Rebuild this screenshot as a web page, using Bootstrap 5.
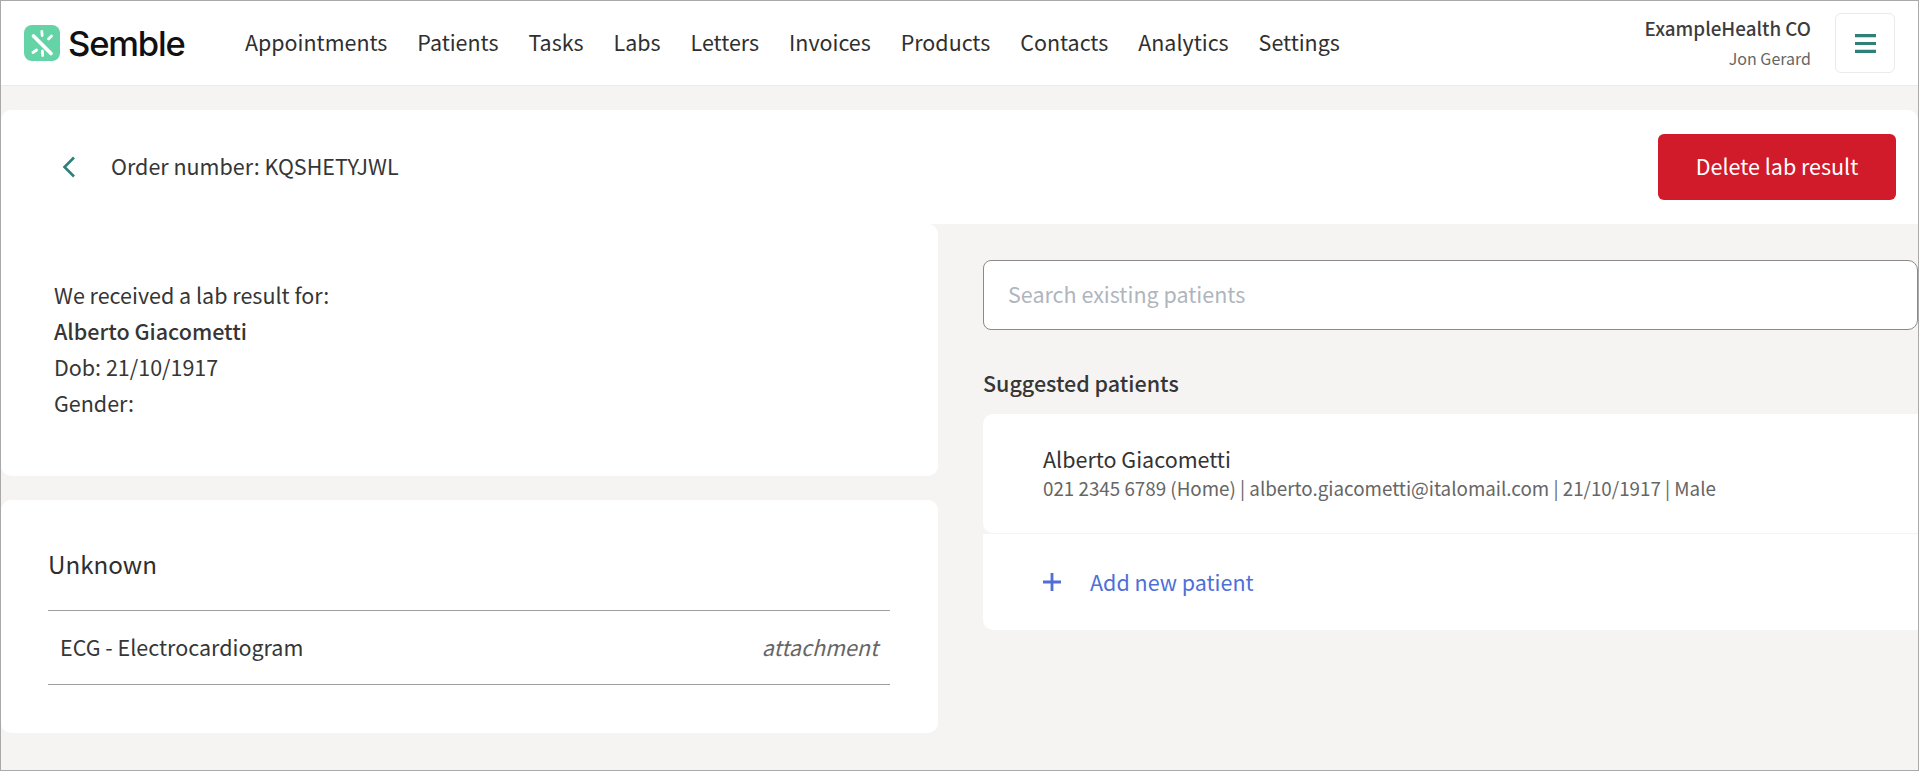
<!doctype html>
<html lang="en">
<head>
<meta charset="utf-8">
<title>Semble</title>
<link href="https://cdn.jsdelivr.net/npm/bootstrap@5.3.0/dist/css/bootstrap.min.css" rel="stylesheet">
<style>
html,body{height:100%;overflow:hidden}
body{background:#f5f4f2;color:#363636;font-family:"Noto Sans CJK JP","Noto Sans",sans-serif;font-size:21.5px;line-height:36px;border:1px solid #a9a9a9;}
.top-bar{height:85px;background:#fff;border-bottom:1px solid #ebebeb;padding:0 23px 0 23px;flex-wrap:nowrap}
.logo-box{gap:8px;width:221px;flex:none}
.logo-word{font-family:Inter,sans-serif;font-weight:500;font-size:34.6px;letter-spacing:-1.2px;color:#111;line-height:40px}
.main-links{gap:30px;padding-bottom:3px}
.main-links .nav-link{padding:0;color:#2f2f2f;font-size:21.45px;line-height:30px}
.org-box{text-align:right;line-height:1;margin-right:24px;padding-bottom:1px}
.org-name{font-weight:500;font-size:18.8px;color:#3d3d3d;line-height:30px}
.org-user{font-size:16px;color:#666;line-height:30px}
.menu-btn{width:60px;height:60px;border:1px solid #eaeaea;border-radius:6px;background:#fff;padding:0}
.head-card{height:114px;margin-top:24px;background:#fff;border:0;border-radius:10px 10px 0 0;padding:0 22px 0 61px}
.order-text{margin-left:35px;padding-bottom:3px}
.del-btn{width:238px;height:66px;background:#d11a2a;border:0;border-radius:6px;color:#fff;font-size:21.5px;font-weight:400;padding:0 0 2px}
.work-area{gap:45px}
.left-side{width:937px;flex:none;gap:24px}
.right-side{padding-top:36px;min-width:0}
.white-panel{background:#fff;border:0;border-radius:0 10px 10px 10px}
.info-panel{height:252px;padding:53px 53px}
.info-panel strong{font-weight:500}
.res-panel{height:233px;padding:36px 48px 0 47px;border-radius:10px}
.res-title{font-size:24.2px;line-height:56px;height:75px;border-bottom:1px solid #9e9e9e;color:#2f2f2f}
.res-row{height:74px;border-bottom:1px solid #9e9e9e;padding:0 12px 2px}
.res-row em{color:#666}
.search-field.form-control{height:70px;border:1px solid #8a8a8a;border-radius:8px 10px 10px 8px;padding:0 24px 3px;font-size:21.5px;color:#333;background:#fff}
.search-field::placeholder{color:#b0b5bd}
.sug-title{font-weight:500;line-height:30px;margin:38px 0 16px}
.pat-list{background:transparent;border-radius:10px 0 0 10px}
.pat-list .list-group-item{border:0;background:#fff;padding:0 60px}
.pat-one{height:119px;padding-top:29px!important;border-radius:10px 0 0 10px!important}
.pat-name{font-size:21.5px;line-height:31px;color:#333}
.pat-sub{font-size:18.8px;line-height:28px;color:#666}
.pat-two{height:96px;margin-top:1px;border-radius:0 0 0 10px!important;gap:29px;color:#4f6fd8;font-size:21.5px}
.pat-two span{padding-bottom:1px}
</style>
</head>
<body>
<nav class="navbar top-bar d-flex align-items-center">
  <a class="d-flex align-items-center logo-box text-decoration-none" href="#">
    <svg width="36" height="36" viewBox="0 0 36 36" aria-hidden="true"><rect width="36" height="36" rx="8" fill="#64d3a6"/><g stroke="#fff" stroke-linecap="round" fill="none"><path d="M9.5 11 L27 28.5" stroke-width="3.8"/><path d="M17.8 6.5 L18.2 10.5" stroke-width="2.8"/><path d="M27.5 11 L24.5 14" stroke-width="2.8"/><path d="M9 27.5 L12.5 25" stroke-width="2.8"/><path d="M18.4 26 L18.6 30.5" stroke-width="2.8"/></g></svg>
    <span class="logo-word">Semble</span>
  </a>
  <ul class="nav main-links flex-nowrap me-auto">
    <li class="nav-item"><a class="nav-link" href="#">Appointments</a></li>
    <li class="nav-item"><a class="nav-link" href="#">Patients</a></li>
    <li class="nav-item"><a class="nav-link" href="#">Tasks</a></li>
    <li class="nav-item"><a class="nav-link" href="#">Labs</a></li>
    <li class="nav-item"><a class="nav-link" href="#">Letters</a></li>
    <li class="nav-item"><a class="nav-link" href="#">Invoices</a></li>
    <li class="nav-item"><a class="nav-link" href="#">Products</a></li>
    <li class="nav-item"><a class="nav-link" href="#">Contacts</a></li>
    <li class="nav-item"><a class="nav-link" href="#">Analytics</a></li>
    <li class="nav-item"><a class="nav-link" href="#">Settings</a></li>
  </ul>
  <div class="org-box"><div class="org-name">ExampleHealth CO</div><div class="org-user">Jon Gerard</div></div>
  <button class="btn menu-btn d-flex align-items-center justify-content-center" aria-label="Menu">
    <svg width="21" height="19" viewBox="0 0 21 19" aria-hidden="true"><path d="M0 1.6H21M0 9.5H21M0 17.4H21" stroke="#2f7f7a" stroke-width="3.2"/></svg>
  </button>
</nav>
<div class="head-card d-flex align-items-center justify-content-between">
  <div class="d-flex align-items-center">
    <svg width="14" height="22" viewBox="0 0 14 22" aria-hidden="true"><path d="M12 1.5 L2.5 11 L12 20.5" fill="none" stroke="#2f7f7a" stroke-width="2.6"/></svg>
    <span class="order-text">Order number: KQSHETYJWL</span>
  </div>
  <button class="btn del-btn">Delete lab result</button>
</div>
<div class="d-flex work-area">
  <div class="d-flex flex-column left-side">
    <div class="white-panel info-panel">
      <div>We received a lab result for:</div>
      <div><strong>Alberto Giacometti</strong></div>
      <div>Dob: 21/10/1917</div>
      <div>Gender:</div>
    </div>
    <div class="white-panel res-panel">
      <div class="res-title">Unknown</div>
      <div class="res-row d-flex align-items-center justify-content-between"><span>ECG - Electrocardiogram</span><em>attachment</em></div>
    </div>
  </div>
  <div class="flex-grow-1 right-side">
    <input class="form-control search-field" type="text" placeholder="Search existing patients">
    <div class="sug-title">Suggested patients</div>
    <div class="list-group pat-list">
      <div class="list-group-item pat-one">
        <div class="pat-name">Alberto Giacometti</div>
        <div class="pat-sub">021 2345 6789 (Home) | alberto.giacometti@italomail.com | 21/10/1917 | Male</div>
      </div>
      <div class="list-group-item pat-two d-flex align-items-center">
        <svg width="18" height="18" viewBox="0 0 18 18" aria-hidden="true"><path d="M9 0V18M0 9H18" stroke="#4f6fd8" stroke-width="2.8"/></svg>
        <span>Add new patient</span>
      </div>
    </div>
  </div>
</div>
<script src="https://cdn.jsdelivr.net/npm/bootstrap@5.3.0/dist/js/bootstrap.bundle.min.js"></script>
</body>
</html>
